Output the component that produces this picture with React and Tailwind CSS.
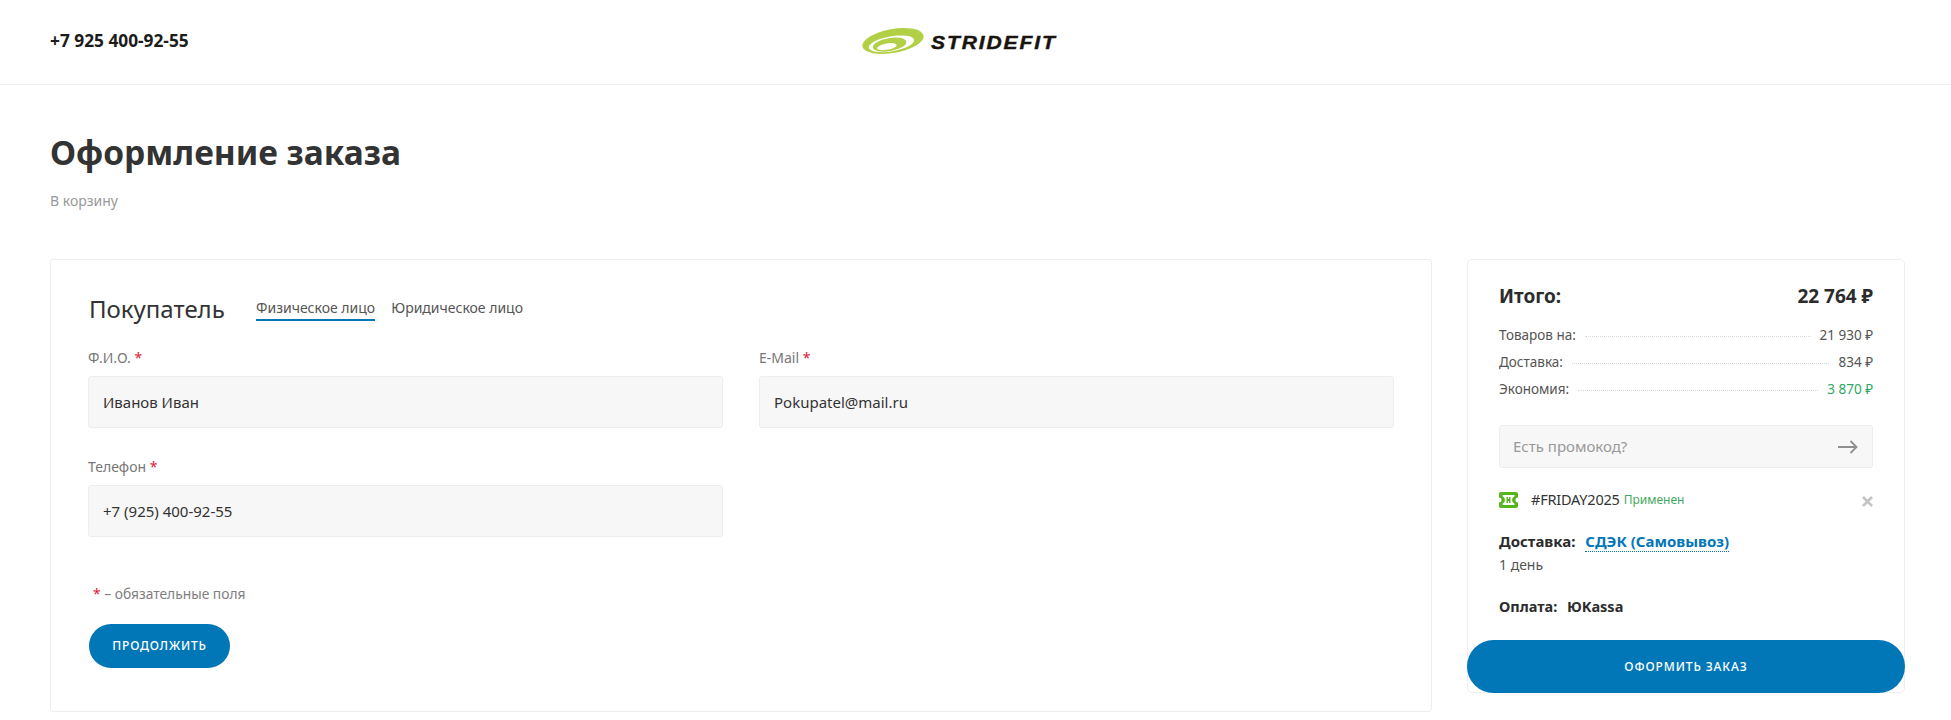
import React from 'react';

const font = { fontFamily: '"Noto Sans", sans-serif' };

const Logo = () => (
  <div className="flex items-center gap-[6px] -mt-[3px]">
    <svg width="63" height="30" viewBox="0 0 63 30">
      <g transform="rotate(-10 31 15)">
        <ellipse cx="31" cy="15" rx="31" ry="12" fill="#b1d045" />
        <ellipse cx="29" cy="17.500" rx="23" ry="7.500" fill="#fff" />
        <ellipse cx="27" cy="18" rx="17" ry="6.500" fill="#b1d045" />
        <ellipse cx="24" cy="19.500" rx="10" ry="3.200" fill="#fff" />
      </g>
    </svg>
    <span className="text-[#1a1410] text-[18px] leading-none font-bold italic tracking-[1.6px] mt-[5px] [font-family:'Liberation_Sans',sans-serif] [transform:scaleX(1.17)] origin-left w-[127px] whitespace-nowrap [-webkit-text-stroke:0.4px_#1a1410]">STRIDEFIT</span>
  </div>
);

const Field = ({ label, value, className = '' }) => (
  <div className={className}>
    <div className="text-[14px] leading-[20px] text-[#777] mb-[8px]">
      {label} <span className="text-[#e2173c]">*</span>
    </div>
    <div className="h-[52px] flex items-center px-[14px] bg-[#f7f7f7] border border-[#eeeeee] rounded-[3px] text-[15px] text-[#333]">
      {value}
    </div>
  </div>
);

const Row = ({ label, value, green }) => (
  <div className="flex items-center h-[27px] text-[13.500px] text-[#555]">
    <span>{label}</span>
    <span className="flex-1 mx-[9px] border-b border-dotted border-[#d9d9d9] mt-[2px]" />
    <span className={green ? 'text-[#2fa866]' : ''}>{value}</span>
  </div>
);

export default function App() {
  return (
    <div style={font} className="bg-white h-[720px] overflow-hidden text-[#333]">
      {/* шапка */}
      <header className="h-[85px] border-b border-[#eeeeee] px-[50px] flex items-center">
        <span className="text-[17.300px] font-bold text-[#1c1c1c] -mt-[2px]">+7 925 400-92-55</span>
        <div className="flex-1 flex justify-center pr-[170px]">
          <Logo />
        </div>
      </header>

      <main className="pl-[50px] pr-[46px]">
        <h1 className="mt-[45px] text-[33.500px] leading-[44px] font-bold text-[#333]">Оформление заказа</h1>
        <a className="block mt-[17px] text-[14px] leading-[20px] text-[#999]">В корзину</a>

        <div className="mt-[48px] flex gap-[35px] items-start">
          {/* покупатель */}
          <section className="w-[1382px] shrink-0 h-[453px] border border-[#eeeeee] rounded-[3px] pt-[29px] pl-[37px] pr-[37px]">
            <div className="flex items-start h-[40px]">
              <h2 className="text-[24px] leading-[40px] text-[#333] w-[168px] pl-[1px]">Покупатель</h2>
              <div className="flex gap-[16px] text-[14px] text-[#555] mt-[6px]">
                <span className="h-[26px] leading-[26px] border-b-2 border-[#0277b8]">Физическое лицо</span>
                <span className="h-[26px] leading-[26px]">Юридическое лицо</span>
              </div>
            </div>
            <div className="grid grid-cols-2 gap-x-[36px] gap-y-[29px] mt-[19px]">
              <Field label="Ф.И.О." value="Иванов Иван" />
              <Field label="E-Mail" value="Pokupatel@mail.ru" />
              <Field label="Телефон" value="+7 (925) 400-92-55" />
            </div>
            <div className="mt-[47px] ml-[5px] text-[13.800px] leading-[20px] text-[#808080]">
              <span className="text-[#e2173c]">*</span> – обязательные поля
            </div>
            <button className="mt-[20px] ml-[1px] w-[141px] h-[44px] rounded-full bg-[#0277b8] text-white text-[12px] font-medium tracking-[0.8px]">ПРОДОЛЖИТЬ</button>
          </section>

          {/* итого */}
          <aside className="w-[438px] shrink-0 h-[434px] border border-[#eeeeee] rounded-[5px] flex flex-col">
            <div className="px-[31px] pt-[23px] flex-1">
              <div className="flex justify-between items-center h-[26px] text-[19px] font-bold text-[#2c2c2c]">
                <span>Итого:</span>
                <span>22 764 ₽</span>
              </div>
              <div className="mt-[13px]">
                <Row label="Товаров на:" value="21 930 ₽" />
                <Row label="Доставка:" value="834 ₽" />
                <Row label="Экономия:" value="3 870 ₽" green />
              </div>
              <div className="mt-[22px] h-[43px] flex items-center justify-between pl-[13px] pr-[14px] bg-[#f7f7f7] border border-[#eeeeee] rounded-[3px] text-[15px] text-[#999]">
                <span>Есть промокод?</span>
                <svg width="20" height="14" viewBox="0 0 20 14" fill="none" stroke="#8f8f8f" strokeWidth="1.800">
                  <path d="M0 7h18.500M12.500 1l6 6-6 6" />
                </svg>
              </div>
              <div className="mt-[20px] h-[24px] flex items-center text-[14.500px]">
                <svg width="19" height="16" viewBox="0 0 19 16" className="mr-[13px]">
                  <path fillRule="evenodd" fill="#58b41c" d="M2 0h15a2 2 0 0 1 2 2v3.500a2.500 2.500 0 0 0 0 5V14a2 2 0 0 1-2 2H2a2 2 0 0 1-2-2v-3.500a2.500 2.500 0 0 0 0-5V2a2 2 0 0 1 2-2zm1.500 3v1.300a4 4 0 0 1 0 7.400V13h12v-1.300a4 4 0 0 1 0-7.400V3zM7.500 5H9v2h1V5h1.500v6H10V9H9v2H7.500z" />
                </svg>
                <span className="text-[#333] tracking-[-0.2px]">#FRIDAY2025</span>
                <span className="ml-[4px] text-[12px] text-[#3fa95f]">Применен</span>
                <svg width="11" height="11" viewBox="0 0 11 11" className="ml-auto mt-[2px]" stroke="#c4c4c4" strokeWidth="2.600">
                  <path d="M1 1l9 9M10 1l-9 9" />
                </svg>
              </div>
              <div className="mt-[18px] text-[15px] leading-[22px] font-bold text-[#2c2c2c]">
                Доставка: <a className="ml-[6px] text-[#0277b8] border-b border-dotted border-[#0277b8]">СДЭК (Самовывоз)</a>
              </div>
              <div className="mt-[2px] text-[14px] leading-[22px] text-[#555]">1 день</div>
              <div className="mt-[19px] text-[14.500px] leading-[22px] font-bold text-[#2c2c2c]">
                Оплата: <span className="ml-[6px]">ЮKassa</span>
              </div>
            </div>
            <button className="-mx-px -mb-px h-[53px] rounded-full bg-[#0277b8] text-white text-[12px] font-medium tracking-[0.9px]">ОФОРМИТЬ ЗАКАЗ</button>
          </aside>
        </div>
      </main>
    </div>
  );
}
